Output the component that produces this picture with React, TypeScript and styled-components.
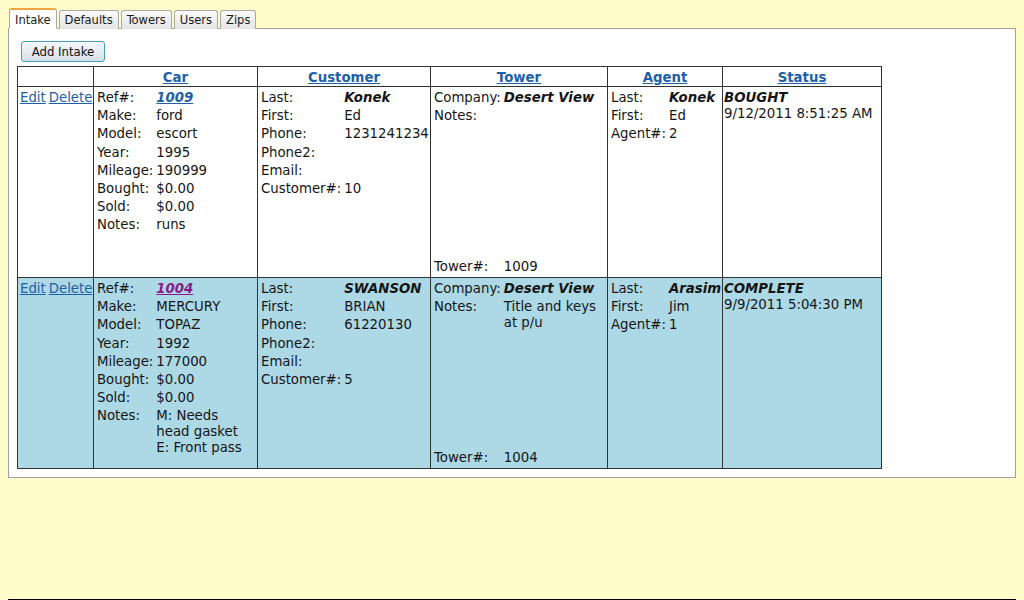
import React from "react";
import styled, { createGlobalStyle } from "styled-components";

const GlobalStyle = createGlobalStyle`
  html, body { margin: 0; padding: 0; background: #fffcc9; }
  body { font-family: "DejaVu Sans", Verdana, sans-serif; font-size: 13.3px; color: #151515; }
  * { box-sizing: border-box; }
`;

const Page = styled.div`
  height: 600px;
  overflow: hidden;
  padding: 8px 8px 0 8px;
  display: flex;
  flex-direction: column;
`;

const TabBar = styled.div`
  display: flex;
  align-items: flex-end;
  gap: 2px;
  padding-left: 1px;
  height: 21px;
  margin-bottom: -1px;
`;

const Tab = styled.div<{ $active?: boolean }>`
  position: relative;
  z-index: ${(p) => (p.$active ? 2 : 1)};
  font-family: "DejaVu Sans Condensed", "DejaVu Sans", Tahoma, sans-serif;
  font-size: 12.8px;
  line-height: 16px;
  color: #1a1a1a;
  padding: 0 5px;
  border: 1px solid #a9a9a9;
  border-radius: 3px 3px 0 0;
  ${(p) =>
    p.$active
      ? `
    height: 21px;
    padding-top: 2px;
    background: #ffffff;
    border-top: 2px solid #f0a640;
    border-bottom: 1px solid #ffffff;
  `
      : `
    height: 19px;
    padding-top: 1px;
    background: linear-gradient(#fbfbfb, #e4e4e4);
    border-bottom: none;
  `}
`;

const Panel = styled.div`
  background: #ffffff;
  border: 1px solid #a0a0a0;
  padding: 12px 8px 8px 8px;
`;

const AddButton = styled.button`
  display: block;
  width: 84px;
  height: 21px;
  margin: 0 0 4px 4px;
  padding: 0;
  border: 1px solid #4a9cb6;
  border-radius: 3px;
  background: linear-gradient(#f6f8fa, #d6dee6);
  font-family: "DejaVu Sans Condensed", "DejaVu Sans", Tahoma, sans-serif;
  font-size: 13px;
  color: #111;
`;

const Table = styled.table`
  border-collapse: collapse;
  table-layout: fixed;
  width: 864px;
  border: 1px solid #000;
`;

const Th = styled.th<{ $w: number }>`
  width: ${(p) => p.$w}px;
  border: 1px solid #333;
  padding: 2px 0 0 0;
  height: 19px;
  line-height: 17px;
  text-align: center;
  font-weight: bold;
`;

const HeaderLink = styled.a`
  color: #1d5fa8;
  text-decoration: underline;
`;

const Row = styled.tr<{ $alt?: boolean }>`
  background: ${(p) => (p.$alt ? "#add8e6" : "#ffffff")};
`;

const Td = styled.td<{ $pl?: number }>`
  border: 1px solid #333;
  vertical-align: top;
  padding: 3px 2px 2px ${(p) => p.$pl ?? 3}px;
  line-height: 16px;
`;

const CellBody = styled.div`
  height: 185px;
`;

const Actions = styled.div`
  white-space: nowrap;
  display: flex;
  gap: 3px;
`;

const ActionLink = styled.a`
  color: #1d5fa8;
  text-decoration: underline;
`;

const Fields = styled.div<{ $fill?: boolean }>`
  display: grid;
  grid-template-columns: max-content auto;
  column-gap: 3px;
  row-gap: 2.2px;
  line-height: 16px;
  ${(p) =>
    p.$fill
      ? `
    height: 100%;
    grid-template-rows: auto 1fr auto;
  `
      : ""}
`;

const Label = styled.span`
  white-space: nowrap;
`;

const Value = styled.span``;

const Strong = styled.span`
  font-weight: bold;
  font-style: italic;
`;

const RefLink = styled.a<{ $visited?: boolean }>`
  font-weight: bold;
  font-style: italic;
  text-decoration: underline;
  color: ${(p) => (p.$visited ? "#8a1a8a" : "#1d5fa8")};
`;

const StatusBlock = styled.div`
  line-height: 16px;
`;

const Footer = styled.div`
  margin-top: auto;
  height: 1px;
  background: #000;
`;

type Intake = {
  ref: string;
  visited: boolean;
  make: string;
  model: string;
  year: string;
  mileage: string;
  bought: string;
  sold: string;
  notes: React.ReactNode;
  last: string;
  first: string;
  phone: string;
  customerNo: string;
  company: string;
  towerNotes: string;
  towerNo: string;
  agentLast: string;
  agentFirst: string;
  agentNo: string;
  status: string;
  date: string;
};

const rows: Intake[] = [
  {
    ref: "1009",
    visited: false,
    make: "ford",
    model: "escort",
    year: "1995",
    mileage: "190999",
    bought: "$0.00",
    sold: "$0.00",
    notes: "runs",
    last: "Konek",
    first: "Ed",
    phone: "1231241234",
    customerNo: "10",
    company: "Desert View",
    towerNotes: "",
    towerNo: "1009",
    agentLast: "Konek",
    agentFirst: "Ed",
    agentNo: "2",
    status: "BOUGHT",
    date: "9/12/2011 8:51:25 AM",
  },
  {
    ref: "1004",
    visited: true,
    make: "MERCURY",
    model: "TOPAZ",
    year: "1992",
    mileage: "177000",
    bought: "$0.00",
    sold: "$0.00",
    notes: (
      <>
        M: Needs head gasket
        <br />
        E: Front pass
      </>
    ),
    last: "SWANSON",
    first: "BRIAN",
    phone: "61220130",
    customerNo: "5",
    company: "Desert View",
    towerNotes: "Title and keys at p/u",
    towerNo: "1004",
    agentLast: "Arasim",
    agentFirst: "Jim",
    agentNo: "1",
    status: "COMPLETE",
    date: "9/9/2011 5:04:30 PM",
  },
];

const tabs = ["Intake", "Defaults", "Towers", "Users", "Zips"];

export default function App() {
  return (
    <>
      <GlobalStyle />
      <Page>
        <TabBar>
          {tabs.map((t, i) => (
            <Tab key={t} $active={i === 0}>
              {t}
            </Tab>
          ))}
        </TabBar>
        <Panel>
          <AddButton>Add Intake</AddButton>
          <Table>
            <thead>
              <tr>
                <Th $w={76}></Th>
                <Th $w={164}>
                  <HeaderLink href="#">Car</HeaderLink>
                </Th>
                <Th $w={173}>
                  <HeaderLink href="#">Customer</HeaderLink>
                </Th>
                <Th $w={177}>
                  <HeaderLink href="#">Tower</HeaderLink>
                </Th>
                <Th $w={115}>
                  <HeaderLink href="#">Agent</HeaderLink>
                </Th>
                <Th $w={159}>
                  <HeaderLink href="#">Status</HeaderLink>
                </Th>
              </tr>
            </thead>
            <tbody>
              {rows.map((r, idx) => (
                <Row key={r.ref} $alt={idx % 2 === 1}>
                  <Td $pl={2}>
                    <CellBody>
                      <Actions>
                        <ActionLink href="#">Edit</ActionLink>
                        <ActionLink href="#">Delete</ActionLink>
                      </Actions>
                    </CellBody>
                  </Td>
                  <Td>
                    <CellBody>
                      <Fields>
                        <Label>Ref#:</Label>
                        <Value>
                          <RefLink href="#" $visited={r.visited}>
                            {r.ref}
                          </RefLink>
                        </Value>
                        <Label>Make:</Label>
                        <Value>{r.make}</Value>
                        <Label>Model:</Label>
                        <Value>{r.model}</Value>
                        <Label>Year:</Label>
                        <Value>{r.year}</Value>
                        <Label>Mileage:</Label>
                        <Value>{r.mileage}</Value>
                        <Label>Bought:</Label>
                        <Value>{r.bought}</Value>
                        <Label>Sold:</Label>
                        <Value>{r.sold}</Value>
                        <Label>Notes:</Label>
                        <Value>{r.notes}</Value>
                      </Fields>
                    </CellBody>
                  </Td>
                  <Td>
                    <CellBody>
                      <Fields>
                        <Label>Last:</Label>
                        <Value>
                          <Strong>{r.last}</Strong>
                        </Value>
                        <Label>First:</Label>
                        <Value>{r.first}</Value>
                        <Label>Phone:</Label>
                        <Value>{r.phone}</Value>
                        <Label>Phone2:</Label>
                        <Value></Value>
                        <Label>Email:</Label>
                        <Value></Value>
                        <Label>Customer#:</Label>
                        <Value>{r.customerNo}</Value>
                      </Fields>
                    </CellBody>
                  </Td>
                  <Td>
                    <CellBody>
                      <Fields $fill>
                        <Label>Company:</Label>
                        <Value>
                          <Strong>{r.company}</Strong>
                        </Value>
                        <Label>Notes:</Label>
                        <Value>{r.towerNotes}</Value>
                        <Label>Tower#:</Label>
                        <Value>{r.towerNo}</Value>
                      </Fields>
                    </CellBody>
                  </Td>
                  <Td>
                    <CellBody>
                      <Fields>
                        <Label>Last:</Label>
                        <Value>
                          <Strong>{r.agentLast}</Strong>
                        </Value>
                        <Label>First:</Label>
                        <Value>{r.agentFirst}</Value>
                        <Label>Agent#:</Label>
                        <Value>{r.agentNo}</Value>
                      </Fields>
                    </CellBody>
                  </Td>
                  <Td $pl={1}>
                    <CellBody>
                      <StatusBlock>
                        <Strong>{r.status}</Strong>
                        <div>{r.date}</div>
                      </StatusBlock>
                    </CellBody>
                  </Td>
                </Row>
              ))}
            </tbody>
          </Table>
        </Panel>
        <Footer />
      </Page>
    </>
  );
}
